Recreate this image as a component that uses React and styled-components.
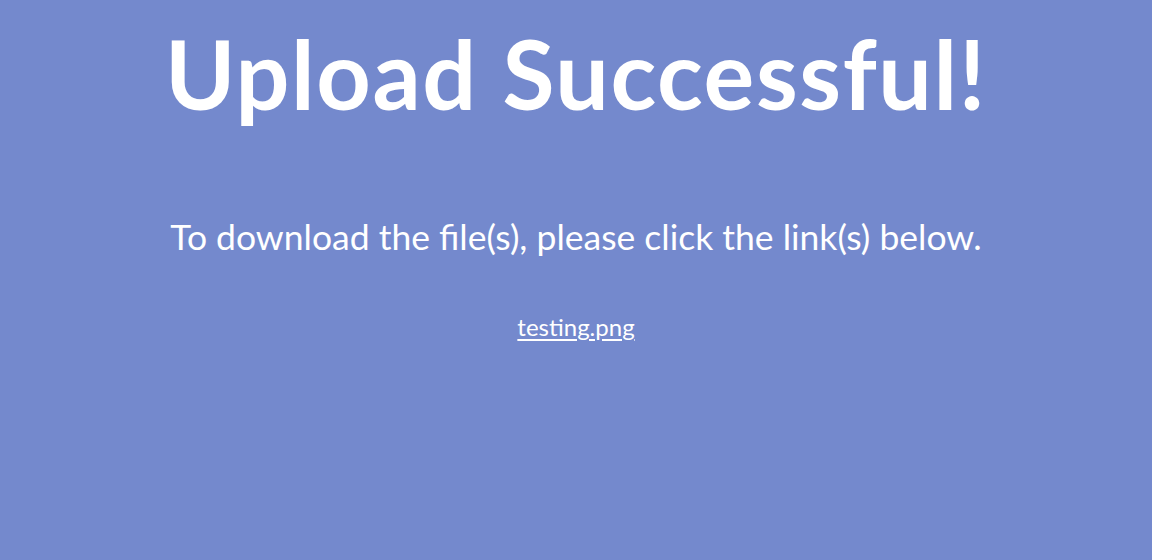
import React from "react";
import styled, { createGlobalStyle } from "styled-components";

const GlobalStyle = createGlobalStyle`
  html, body {
    margin: 0;
    padding: 0;
    background: #7489cd;
  }
  body {
    font-family: "Lato", "Open Sans", sans-serif;
    color: #ffffff;
  }
`;

const Page = styled.div`
  min-height: 560px;
  display: flex;
  flex-direction: column;
  align-items: center;
  text-align: center;
`;

const Heading = styled.h1`
  margin: 18px 0 0;
  font-size: 95px;
  font-weight: 700;
  line-height: 110px;
  letter-spacing: 1.6px;
`;

const Message = styled.p`
  margin: 87px 0 0;
  font-size: 35.5px;
  font-weight: 400;
  line-height: 44px;
`;

const FileLink = styled.a`
  margin-top: 53px;
  font-size: 24px;
  line-height: 30px;
  color: #ffffff;
  text-decoration: underline;
  text-underline-offset: 3px;
`;

const App = () => {
  return (
    <Page>
      <GlobalStyle />
      <Heading>Upload Successful!</Heading>
      <Message>To download the file(s), please click the link(s) below.</Message>
      <FileLink href="#">testing.png</FileLink>
    </Page>
  );
};

export default App;
